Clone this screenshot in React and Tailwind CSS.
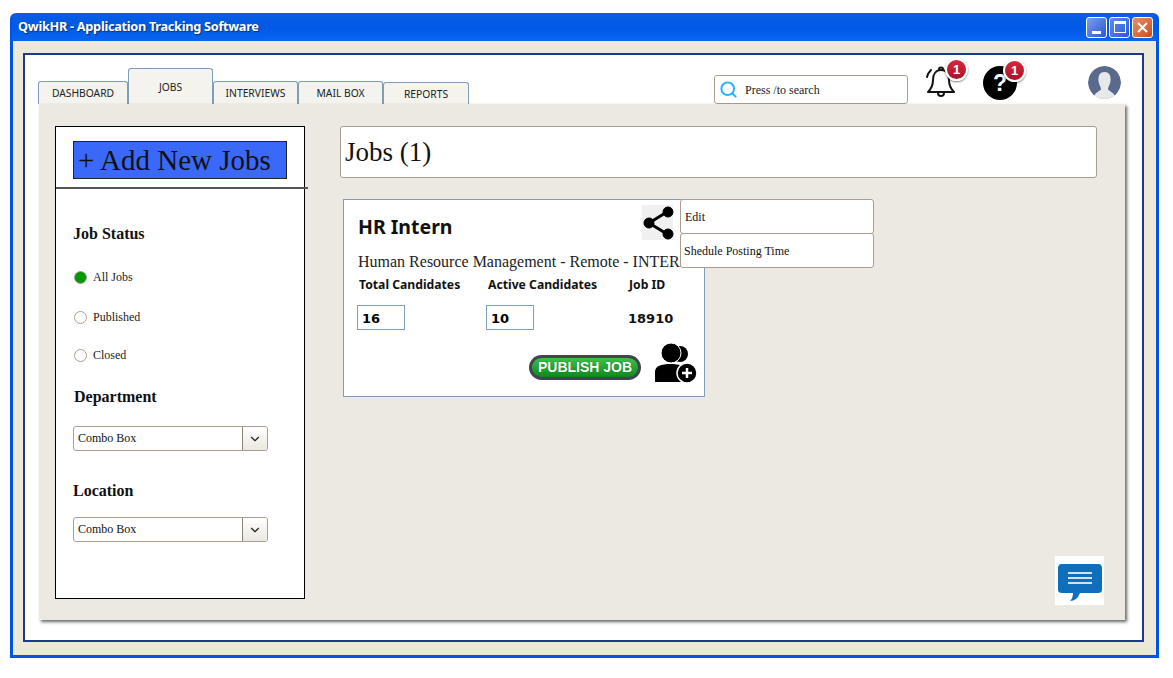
import React from "react";
import { ChevronDown, Search } from "lucide-react";

const serif = "font-['Liberation_Serif',serif]";

function Tab({ label, className }) {
  return (
    <div
      className={`flex justify-center border border-b-0 border-[#7f9db9] rounded-t-[3px] bg-[#f4f3ee] text-[10.3px] text-[#222] font-['Noto_Sans',sans-serif] ${className}`}
    >
      {label}
    </div>
  );
}

function Badge({ className }) {
  return (
    <div className={`absolute w-[23px] h-[23px] rounded-full border-2 border-white bg-gradient-to-b from-[#d8283c] to-[#a8142a] shadow-[0_1px_2px_rgba(0,0,0,0.5)] flex items-center justify-center text-white text-[13px] font-bold font-['Liberation_Sans',sans-serif] ${className}`}>
      1
    </div>
  );
}

function Radio({ label, checked, className }) {
  return (
    <div className={`flex items-center gap-[6px] leading-[14px] ${className}`}>
      <div className={`w-[13px] h-[13px] rounded-full border-[1.5px] border-[#a89f91] ${checked ? "bg-[#009900]" : "bg-white"}`} />
      <span className={`${serif} text-[12px] text-[#222]`}>{label}</span>
    </div>
  );
}

function Combo({ className }) {
  return (
    <div className={`w-[195px] h-[25px] flex border border-[#a89f91] rounded-[3px] bg-white ${className}`}>
      <div className={`flex-1 pl-[4px] leading-[23px] ${serif} text-[12px] text-[#111]`}>Combo Box</div>
      <div className="w-[25px] border-l border-[#8a8275] bg-gradient-to-b from-white to-[#ebe8e0] rounded-r-[3px] flex items-center justify-center">
        <ChevronDown size={14} strokeWidth={2} color="#222" />
      </div>
    </div>
  );
}

function WinButton({ children, className }) {
  return (
    <div className={`w-[21px] h-[21px] border border-white rounded-[3px] flex items-center justify-center ${className}`}>
      {children}
    </div>
  );
}

export default function App() {
  return (
    <div className="w-[1173px] h-[678px] bg-white pt-[13px] pl-[10px] overflow-hidden">
      {/* window */}
      <div className="w-[1149px] h-[645px] rounded-t-[6px] border-x-[3px] border-b-[3px] border-[#0054e3] bg-[#ece9d8] flex flex-col">
        <div className="h-[28px] -mx-[1px] shrink-0 rounded-t-[5px] bg-gradient-to-b from-[#0a5fe0] via-[#0058e6] to-[#0a66f0] flex items-center justify-between pl-[6px] pr-[4px]">
          <span className="text-white text-[12.750px] font-bold font-['Noto_Sans',sans-serif] tracking-[-0.3px] [text-shadow:1px_1px_1px_#0a2f80]">
            QwikHR - Application Tracking Software
          </span>
          <div className="flex gap-[2px]">
            <WinButton className="bg-gradient-to-br from-[#7f9cf0] to-[#2a56d0] items-end pb-[3px]">
              <div className="w-[9px] h-[3px] bg-white" />
            </WinButton>
            <WinButton className="bg-gradient-to-br from-[#5f8cf0] to-[#2a5ad8]">
              <div className="w-[12px] h-[12px] border border-white border-t-[3px]" />
            </WinButton>
            <WinButton className="bg-gradient-to-br from-[#e8906a] to-[#d0451c]">
              <svg width="11" height="11" viewBox="0 0 11 11">
                <path d="M1 1 L10 10 M10 1 L1 10" stroke="white" strokeWidth="2" />
              </svg>
            </WinButton>
          </div>
        </div>

        {/* inner frame */}
        <div className="mt-[12px] ml-[10px] w-[1121px] h-[589px] border-2 border-[#1c3a8a] bg-white flex flex-col">
          <div className="h-[49px] shrink-0 flex items-end relative">
            <div className="flex items-end ml-[13px]">
              <Tab label="DASHBOARD" className="w-[90px] h-[23px] pt-[4px]" />
              <Tab label="JOBS" className="w-[85px] h-[36px] pt-[11px]" />
              <Tab label="INTERVIEWS" className="w-[85px] h-[23px] pt-[4px]" />
              <Tab label="MAIL BOX" className="w-[85px] h-[23px] pt-[4px]" />
              <Tab label="REPORTS" className="w-[86px] h-[22px] pt-[4px]" />
            </div>
            <div className="ml-[245px] w-[194px] h-[29px] border border-[#a89f91] rounded-[3px] bg-white flex items-center pl-[4px]">
              <Search size={19} color="#27b4f5" strokeWidth={2.5} />
              <span className={`ml-[7px] ${serif} text-[12px] text-[#222]`}>Press /to search</span>
            </div>

            {/* bell */}
            <div className="absolute left-[899px] top-[10px] w-[36px] h-[36px]">
              <svg width="34" height="34" viewBox="0 0 34 34" fill="none" stroke="#111" strokeWidth="2" strokeLinecap="round" strokeLinejoin="round">
                <path d="M4 27 C8 23 9 20 9 15 C9 9 12 5 17 5 C22 5 25 9 25 15 C25 20 26 23 30 27 Z" />
                <path d="M14 28 C14 32 20 32 20 28" />
                <path d="M15 4 C15 2 19 2 19 4" />
                <path d="M3 12 C3.500 9 5 7 7 5" />
              </svg>
              <Badge className="left-[21px] -top-[7px]" />
            </div>

            {/* help */}
            <div className="absolute left-[958px] top-[11px] w-[34px] h-[34px] rounded-full bg-black flex items-center justify-center text-white text-[23px] font-bold font-['Liberation_Sans',sans-serif]">
              ?
              <Badge className="left-[20px] -top-[7px]" />
            </div>

            {/* avatar */}
            <div className="absolute left-[1063px] top-[11px] w-[33px] h-[33px] rounded-full overflow-hidden">
              <svg width="33" height="33" viewBox="0 0 33 33">
                <circle cx="16.500" cy="16.500" r="16.500" fill="#5a6a8c" />
                <path d="M16.500 6 C11 6 10 11 10.500 15 C11 19 13 21 13 23 C13 25 6 26 5 33 L28 33 C27 26 20 25 20 23 C20 21 22 19 22.500 15 C23 11 22 6 16.500 6 Z" fill="#e6e9ea" />
              </svg>
            </div>
          </div>

          {/* panel */}
          <div className="ml-[14px] w-[1086px] h-[516px] bg-[#ece9e2] shadow-[2px_2px_3px_rgba(0,0,0,0.6)] flex pl-[16px] pt-[22px] relative">
            {/* filters */}
            <aside className="w-[250px] h-[473px] shrink-0 border border-black bg-white flex flex-col relative pl-[17px]">
              <div className={`mt-[14px] w-[214px] h-[38px] bg-[#3a68f8] border border-[#222] ${serif} text-[29px] text-[#111] leading-[36px] pl-[4px] whitespace-nowrap`}>
                + Add New Jobs
              </div>
              <div className="absolute left-0 top-[60px] w-[252px] h-[2px] bg-[#555]" />
              <h3 className={`mt-[46px] ${serif} font-bold text-[16px] leading-[18px] text-[#111]`}>Job Status</h3>
              <Radio label="All Jobs" checked className="mt-[27px] ml-[1px]" />
              <Radio label="Published" className="mt-[26px] ml-[1px]" />
              <Radio label="Closed" className="mt-[24px] ml-[1px]" />
              <h3 className={`mt-[26px] ml-[1px] ${serif} font-bold text-[16px] leading-[18px] text-[#111]`}>Department</h3>
              <Combo className="mt-[20px]" />
              <h3 className={`mt-[31px] ${serif} font-bold text-[16px] leading-[18px] text-[#111]`}>Location</h3>
              <Combo className="mt-[17px]" />
            </aside>

            <main className="ml-[35px] flex-1">
              <div className={`w-[757px] h-[52px] border border-[#a89f91] rounded-[3px] bg-white pl-[4px] ${serif} text-[27px] text-[#111] leading-[50px]`}>
                Jobs (1)
              </div>

              {/* job card */}
              <div className="mt-[21px] ml-[3px] w-[362px] h-[198px] border border-[#7f9db9] bg-white relative font-['Noto_Sans',sans-serif]">
                <h2 className="absolute left-[14px] top-[12px] text-[19.500px] font-bold text-[#111]">HR Intern</h2>
                <div className="absolute left-[298px] top-[5px] w-[31px] h-[35px] bg-[#f0f0f0]">
                  <svg width="33" height="35" viewBox="0 0 33 35" fill="#000" stroke="#000">
                    <path d="M25 7 L7 18 L25 29" fill="none" strokeWidth="3" />
                    <circle cx="26" cy="7" r="5" />
                    <circle cx="7" cy="18" r="5" />
                    <circle cx="26" cy="29" r="5" />
                  </svg>
                </div>
                <p className={`absolute left-[14px] top-[52px] ${serif} text-[16px] leading-[20px] text-[#222] whitespace-nowrap`}>
                  Human Resource Management - Remote - INTERN
                </p>
                <div className="absolute left-[15px] top-[76px] text-[12.200px] font-bold text-[#111]">Total Candidates</div>
                <div className="absolute left-[144px] top-[76px] text-[12.200px] font-bold text-[#111]">Active Candidates</div>
                <div className="absolute left-[285px] top-[76px] text-[12.200px] font-bold text-[#111]">Job ID</div>
                <div className="absolute left-[13px] top-[105px] w-[48px] h-[25px] border border-[#7f9db9] pl-[4px] text-[13px] font-bold leading-[25px] font-['DejaVu_Sans',sans-serif]">16</div>
                <div className="absolute left-[142px] top-[105px] w-[48px] h-[25px] border border-[#7f9db9] pl-[4px] text-[13px] font-bold leading-[25px] font-['DejaVu_Sans',sans-serif]">10</div>
                <div className="absolute left-[284px] top-[110px] text-[13px] font-bold leading-[18px] text-[#111] font-['DejaVu_Sans',sans-serif]">18910</div>
                <div className="absolute left-[185px] top-[155px] w-[112px] h-[25px] rounded-full border-[3px] border-[#3f4650] bg-gradient-to-b from-[#3cc04a] to-[#0a8a1a] flex items-center justify-center text-white text-[14px] font-bold font-['Liberation_Sans',sans-serif] [text-shadow:0_0_1px_#0a5a10]">
                  PUBLISH JOB
                </div>
                <div className="absolute left-[311px] top-[142px]">
                  <svg width="42" height="42" viewBox="0 0 42 42">
                    <circle cx="25" cy="12" r="8" />
                    <path d="M28 22 C33 23 36 26 37 30 L28 40 Z" />
                    <circle cx="16" cy="11" r="10" fill="#000" stroke="#fff" strokeWidth="1" />
                    <path d="M0 40 L0 30 C0 24 6 22 16 22 C24 22 30 24 30 28 L26 40 Z" />
                    <circle cx="32" cy="31" r="10" fill="#000" stroke="#fff" strokeWidth="1.500" />
                    <path d="M32 26 L32 36 M27 31 L37 31" stroke="#fff" strokeWidth="2.500" />
                  </svg>
                </div>

                {/* menu */}
                <div className={`absolute left-[336px] -top-[1px] w-[194px] ${serif} text-[12px] text-[#111]`}>
                  <div className="h-[35px] border border-[#a89f91] rounded-[3px] bg-white pl-[4px] leading-[35px]">Edit</div>
                  <div className="h-[35px] -mt-[1px] border border-[#a89f91] rounded-[3px] bg-white pl-[3px] leading-[35px]">Shedule Posting Time</div>
                </div>
              </div>
            </main>

            {/* chat */}
            <div className="absolute left-[1016px] top-[452px] w-[49px] h-[49px] bg-white flex items-center justify-center">
              <svg width="46" height="46" viewBox="0 0 46 46">
                <path d="M5 6 L41 6 Q45 6 45 10 L45 32 Q45 35 41 35 L23 35 Q20 43 13 43 Q16 40 16 35 L5 35 Q1 35 1 32 L1 10 Q1 6 5 6 Z" fill="#0f6fbd" />
                <path d="M11 15 L35 15 M11 20 L35 20 M11 25 L35 25" stroke="#cfe3f3" strokeWidth="2" />
              </svg>
            </div>
          </div>
        </div>
      </div>
    </div>
  );
}
